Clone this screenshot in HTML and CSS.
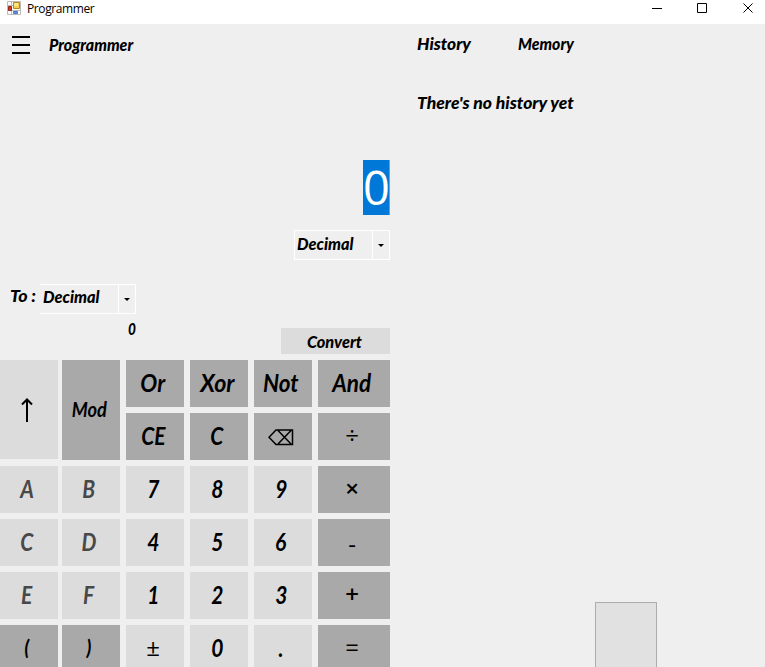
FILE: index.html
```html
<!DOCTYPE html>
<html lang="en">
<head>
<meta charset="utf-8">
<title>Programmer</title>
<link rel="stylesheet" href="styles.css">
</head>
<body>
<header class="titlebar">
  <svg class="app-icon" width="14" height="14" viewBox="0 0 14 14"><path fill="#fff" stroke="#bbb" d="M.5.5h13v13H.5zM4.5.5v13M.5 4.5h13M.5 9.5h13"/><path fill="#f7cf4e" stroke="#b8861c" d="M6.500 1.500h6v6h-6z"/><path fill="#fbe58d" d="M7 2h4v3H7z"/><path fill="#d33a22" stroke="#982519" d="M1.500 5.500h3v4h-3z"/><path fill="#5a98ee" stroke="#5277c0" d="M6.500 10.500h4v2h-4z"/></svg>
  <span class="caption">Programmer</span>
  <svg class="controls" width="102" height="12" viewBox="0 0 102 12" fill="none" stroke="#000"><path d="M0 5.500h10M45.500.5h9v9h-9z"/><path d="M91.500.5l9 9M100.500.5l-9 9"/></svg>
</header>
<main class="window">
  <section class="calc">
    <div class="menu-row">
      <svg width="18" height="18" viewBox="0 0 18 18" stroke="#000" stroke-width="2"><path d="M0 1h18M0 9h18M0 17h18"/></svg>
      <span class="label title">Programmer</span>
    </div>
    <div class="display"><span class="value">0</span></div>
    <div class="combo from"><span class="label decimal">Decimal</span><i></i></div>
    <div class="target"><span class="label to">To :</span><div class="combo"><span class="label decimal">Decimal</span><i></i></div></div>
    <div class="result-row"><span class="label result">0</span><div class="convert"><span class="label">Convert</span></div></div>
    <div class="keys">
      <div class="key first tall arrow"><svg width="12" height="24" viewBox="0 0 12 24" fill="none" stroke="#000" stroke-width="2"><path d="M6 24V2M1 6.500l5-5 5 5"/></svg></div>
      <div class="key dark tall mod"><span>Mod</span></div>
      <div class="key dark"><span class="or">Or</span></div><div class="key dark"><span class="xor">Xor</span></div><div class="key dark"><span class="not">Not</span></div><div class="key dark"><span class="and">And</span></div>
      <div class="key dark"><span class="ce">CE</span></div><div class="key dark"><span>C</span></div>
      <div class="key dark"><svg class="erase" width="26" height="17" viewBox="0 0 26 17" fill="none" stroke="#000" stroke-width="1.500"><path d="M8 1h16.500v14.500H8L1 8.250zM10 1.500l13 13.500M23 1.500L10 15"/></svg></div>
      <div class="key dark"><span class="sym">÷</span></div>
      <div class="key first off"><span>A</span></div><div class="key off"><span>B</span></div><div class="key"><span>7</span></div><div class="key"><span>8</span></div><div class="key"><span>9</span></div><div class="key dark"><span class="sym heavy">×</span></div>
      <div class="key first off"><span>C</span></div><div class="key off"><span>D</span></div><div class="key"><span>4</span></div><div class="key"><span>5</span></div><div class="key"><span>6</span></div><div class="key dark"><span class="sym minus">-</span></div>
      <div class="key first off"><span>E</span></div><div class="key off"><span>F</span></div><div class="key"><span>1</span></div><div class="key"><span>2</span></div><div class="key"><span>3</span></div><div class="key dark"><span class="sym heavy">+</span></div>
      <div class="key first dark"><span class="paren">(</span></div><div class="key dark"><span class="paren">)</span></div><div class="key"><span class="sym">±</span></div><div class="key"><span>0</span></div><div class="key"><span>.</span></div><div class="key dark"><span class="sym">=</span></div>
    </div>
  </section>
  <aside class="side">
    <div class="tabs"><span class="label history">History</span><span class="label memory">Memory</span></div>
    <div class="empty"><span class="label">There's no history yet</span></div>
    <div class="clear"></div>
  </aside>
</main>
</body>
</html>
```
FILE: styles.css
```css
* { box-sizing: border-box; }
body { margin: 0; height: 667px; overflow: hidden; background: #efefef; color: #000; font-family: "Open Sans", sans-serif; }
svg, span { flex: none; }
.titlebar { height: 24px; background: #fff; display: flex; align-items: flex-start; padding: 1px 11px 0 7px; }
.caption { font: 12px/16px "Open Sans", sans-serif; margin-left: 6px; letter-spacing: -.4px; }
.controls { margin: 2px 0 0 auto; }
.window { display: flex; height: 643px; overflow: hidden; }
.calc { width: 390px; flex: none; }
.label { display: inline-block; white-space: nowrap; font: italic 900 17px/22px Lato, sans-serif; transform-origin: 0 50%; transform: scaleX(.96); }
.menu-row { display: flex; height: 42px; padding: 10px 0 0 12px; }
.menu-row svg { margin-top: 2px; }
.title { margin-left: 19px; transform: scaleX(.94); }
.display { height: 164px; display: flex; justify-content: flex-end; padding-top: 94px; }
.value { width: 27px; height: 55px; background: #0078d7; color: #fff; font: 47px/55px "Open Sans", sans-serif; text-align: center; border-right: 1px solid #f07d2b; }
.combo { width: 96px; height: 30px; border: 1px solid #fff; display: flex; justify-content: space-between; padding: 2px 0 0 2px; }
.combo i { width: 17px; height: 28px; margin-top: -2px; border-left: 1px solid #fff; display: flex; align-items: center; justify-content: center; }
.combo i::before { content: ""; border: 3px solid transparent; border-top-color: #000; border-bottom: 0; }
.decimal { width: 58px; }
.from { margin-left: auto; }
.target { height: 54px; padding-top: 24px; display: flex; }
.to { width: 40px; padding-left: 10px; margin-top: 1px; transform-origin: 10px 50%; transform: scaleX(1.05); }
.target .combo { border-left-color: transparent; }
.target .decimal { margin-top: -1px; }
.result-row { display: flex; height: 46px; padding-top: 4px; }
.result { width: 136px; text-align: right; font-size: 16px; transform-origin: 100% 50%; transform: scaleX(.85); }
.convert { width: 109px; height: 26px; margin: 10px 0 0 auto; background: #dcdcdc; padding: 3px 0 0 26px; }
.keys { display: grid; grid-template-columns: 56px repeat(4, 58px) 72px; grid-auto-rows: 47px; gap: 6px; }
.key { background: #dcdcdc; display: flex; align-items: center; justify-content: center; font: italic bold 25px/30px Lato, sans-serif; padding: 0 4px 3px 0; }
.key span { transform: scaleX(.84); }
.first { width: 58px; }
.tall { grid-row: span 2; }
.arrow { height: 99px; padding-bottom: 0; }
.dark { background: #a9a9a9; }
.off { color: #484848; }
.mod { font-size: 21px; padding: 0 3px 3px 0; }
.mod span { transform: scaleX(.87); }
.key .or { transform: scaleX(.9); }
.key .xor { transform: scaleX(.93); }
.key .not { transform: scaleX(.9); }
.key .and { transform: scaleX(.9); }
.key .paren { font-size: 21px; font-weight: 900; }
.erase { margin-top: 4px; }
.key .sym { font: 24px/30px "Open Sans", sans-serif; transform: none; }
.key .heavy { font-weight: 600; }
.key .minus { transform: translateY(3px); }
.side { flex: 1; display: flex; flex-direction: column; padding-left: 27px; }
.tabs { display: flex; padding-top: 9px; height: 68px; }
.history { width: 101px; transform: scaleX(1.02); }
.memory { transform: scaleX(.93); }
.empty .label { transform: scaleX(1.03); }
.clear { width: 62px; height: 66px; flex: none; margin: auto 0 -1px 178px; border: 1px solid #adadad; background: #e1e1e1; }
```
